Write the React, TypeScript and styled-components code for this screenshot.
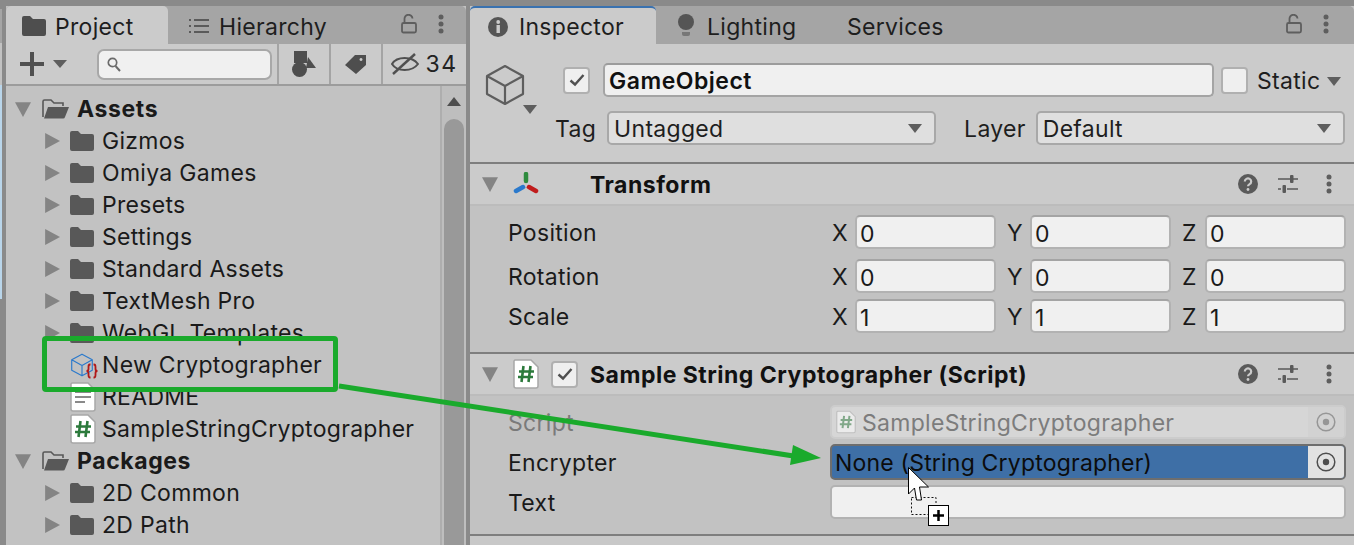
import { ReactNode } from 'react';
import styled, { createGlobalStyle } from 'styled-components';

const GlobalStyle = createGlobalStyle`
  html, body { margin: 0; padding: 0; background: #8a8a8a; }
  body { width: 1354px; height: 545px; overflow: hidden; font-family: Inter, "Liberation Sans", sans-serif; }
  * { box-sizing: border-box; }
`;

const Triangle = ({ dir, color = '#848484', size = 16 }: { dir: 'down' | 'right'; color?: string; size?: number }) => (
  <svg width={size} height={size} viewBox="0 0 14 14">
    <path d={dir === 'down' ? 'M0 1h14L7 14z' : 'M1 0l13 7-13 7z'} fill={color} />
  </svg>
);

const SmallArrow = () => (
  <svg width="14" height="9" viewBox="0 0 14 9"><path d="M0 0h14L7 9z" fill="#5e5e5e" /></svg>
);

const FolderIcon = ({ color = '#585858' }: { color?: string }) => (
  <svg width="24" height="20" viewBox="0 0 24 20">
    <path d="M0 2a2 2 0 0 1 2-2h6l3 3h11a2 2 0 0 1 2 2v13a2 2 0 0 1-2 2H2a2 2 0 0 1-2-2z" fill={color} />
  </svg>
);

const OpenFolderIcon = () => (
  <svg width="28" height="20" viewBox="0 0 28 20">
    <path d="M1 18V2.500A1.500 1.500 0 0 1 2.500 1H9l3 3h9v3" fill="none" stroke="#585858" strokeWidth="1.600" />
    <path d="M2 19.500 6 8h21l-4 10a2 2 0 0 1-2 1.500z" fill="#585858" />
  </svg>
);

const ScriptIcon = ({ faded = false, width = 26, height = 30 }: { faded?: boolean; width?: number; height?: number }) => (
  <svg width={width} height={height} viewBox="0 0 26 30" opacity={faded ? 0.5 : 1}>
    <path d="M2 1h16l7 7v19a2 2 0 0 1-2 2H3a2 2 0 0 1-2-2V2z" fill="#fff" stroke="#a8a8a8" strokeWidth="1.500" />
    <path d="M10.500 7 8.500 23M17.500 7l-2 16M6 12.500h15M5 18h15" stroke="#2c7a3c" strokeWidth="2.600" fill="none" />
  </svg>
);

const TextFileIcon = () => (
  <svg width="26" height="30" viewBox="0 0 26 30">
    <path d="M2 1h16l7 7v19a2 2 0 0 1-2 2H3a2 2 0 0 1-2-2V2z" fill="#fff" stroke="#a8a8a8" strokeWidth="1.500" />
    <path d="M5 10h16M5 15h16M5 20h10" stroke="#8a8a8a" strokeWidth="1.800" />
  </svg>
);

const CubeOutline = ({ color, size, width = 2 }: { color: string; size: number; width?: number }) => (
  <svg width={size} height={size} viewBox="0 0 40 42">
    <path d="M20 2 38 12v18L20 40 2 30V12zM2 12l18 10 18-10M20 22v18" fill="none" stroke={color} strokeWidth={width} strokeLinejoin="round" />
  </svg>
);

const LockIcon = () => (
  <svg width="16" height="20" viewBox="0 0 16 20">
    <path d="M3.500 8V5a4 4 0 0 1 8-.5" fill="none" stroke="#5e5e5e" strokeWidth="1.800" />
    <rect x="1" y="9" width="14" height="9.500" rx="1.500" fill="none" stroke="#5e5e5e" strokeWidth="1.800" />
  </svg>
);

const KebabIcon = ({ color = '#5e5e5e' }: { color?: string }) => (
  <svg width="6" height="20" viewBox="0 0 6 20">
    <circle cx="3" cy="3" r="2.500" fill={color} />
    <circle cx="3" cy="10" r="2.500" fill={color} />
    <circle cx="3" cy="17" r="2.500" fill={color} />
  </svg>
);

const HelpIcon = () => (
  <svg width="20" height="20" viewBox="0 0 20 20">
    <circle cx="10" cy="10" r="10" fill="#5a5a5a" />
    <path d="M6.800 7.500a3.200 3 0 1 1 4.800 2.600c-1 .6-1.600 1-1.600 2.200" fill="none" stroke="#cbcbcb" strokeWidth="2.200" />
    <circle cx="10" cy="15.500" r="1.400" fill="#cbcbcb" />
  </svg>
);

const PresetIcon = () => (
  <svg width="20" height="20" viewBox="0 0 20 20">
    <path d="M0 5h12M15 5h5M0 15h3M9 15h11" stroke="#5a5a5a" strokeWidth="1.600" />
    <rect x="12" y="1" width="3.500" height="8" rx="1" fill="#5a5a5a" />
    <rect x="4.500" y="11" width="3.500" height="8" rx="1" fill="#5a5a5a" />
  </svg>
);

const TargetIcon = ({ faded = false }: { faded?: boolean }) => (
  <svg width="20" height="20" viewBox="0 0 20 20" opacity={faded ? 0.45 : 1}>
    <circle cx="10" cy="10" r="8.800" fill="none" stroke="#4e4e4e" strokeWidth="1.500" />
    <circle cx="10" cy="10" r="3.200" fill="#4e4e4e" />
  </svg>
);

const CheckMark = () => (
  <svg width="16" height="14" viewBox="0 0 16 14">
    <path d="M1.500 7.500 6 11.500 14.500 2" fill="none" stroke="#505050" strokeWidth="2.400" />
  </svg>
);

const Page = styled.div`
  position: relative;
  width: 1354px;
  height: 545px;
  padding: 6px 0 0 6px;
  background: #8a8a8a;
  display: grid;
  grid-template-columns: 460px 884px;
  column-gap: 4px;
  overflow: hidden;

  &::before {
    content: '';
    position: absolute;
    left: 0;
    top: 9px;
    width: 2px;
    height: 290px;
    background: linear-gradient(#a5a5a5 0 34px, #c2c2c2 34px 76px, #b9d5ea 76px);
  }
`;

const Panel = styled.div`
  display: flex;
  flex-direction: column;
  height: 539px;
  background: #c2c2c2;
  min-width: 0;
`;

const TabStrip = styled.div`
  height: 38px;
  flex: none;
  background: #a5a5a5;
  border-radius: 5px 5px 0 0;
  display: flex;
  align-items: flex-start;
`;

const Tab = styled.div<{ $active?: boolean; $width: number; $accent?: boolean; $pad: number; $gap: number }>`
  width: ${(p) => p.$width}px;
  height: 38px;
  display: flex;
  align-items: center;
  gap: ${(p) => p.$gap}px;
  padding: ${(p) => (p.$accent ? 2 : 4)}px 0 0 ${(p) => p.$pad}px;
  font-size: 23px;
  letter-spacing: 0.3px;
  color: #1e1e1e;
  border-radius: 5px 5px 0 0;
  background: ${(p) => (p.$active ? '#cbcbcb' : 'transparent')};
  border-top: ${(p) => (p.$accent ? '2px solid #3a72b0' : 'none')};
`;

const TabGlyph = styled.span`
  display: flex;
  margin-top: -2px;
`;

const TabActions = styled.div<{ $right: number }>`
  margin-left: auto;
  display: flex;
  align-items: center;
  gap: 21px;
  height: 36px;
  padding-right: ${(p) => p.$right}px;
`;

const Toolbar = styled.div`
  height: 42px;
  flex: none;
  background: #cbcbcb;
  border-bottom: 2px solid #9c9c9c;
  display: flex;
  align-items: center;
`;

const CreateButton = styled.div`
  width: 78px;
  padding-left: 14px;
  display: flex;
  align-items: center;
  gap: 9px;
`;

const SearchBox = styled.div`
  width: 175px;
  height: 31px;
  margin-left: 13px;
  margin-right: 5px;
  background: #f0f0f0;
  border: 2px solid #a8a8a8;
  border-radius: 7px;
  display: flex;
  align-items: center;
  padding-left: 8px;
`;

const ToolCell = styled.div<{ $width: number }>`
  width: ${(p) => p.$width}px;
  height: 40px;
  border-left: 2px solid #a4a4a4;
  display: flex;
  align-items: center;
  justify-content: center;
  gap: 6px;
  font-size: 23px;
  letter-spacing: 1.5px;
  color: #222;
`;

const TreeArea = styled.div`
  flex: 1;
  display: flex;
  min-height: 0;
`;

const Tree = styled.div`
  flex: 1;
  padding-top: 7px;
`;

const TreeRow = styled.div<{ $depth: number; $bold?: boolean }>`
  height: 32px;
  display: flex;
  align-items: center;
  padding-left: ${(p) => (p.$depth === 0 ? 9 : p.$depth === 1 ? 38 : 64)}px;
  font-size: 23px;
  font-weight: ${(p) => (p.$bold ? 700 : 400)};
  letter-spacing: ${(p) => (p.$bold ? 0.6 : 0.3)}px;
  color: #1a1a1a;
  white-space: nowrap;
`;

const Caret = styled.span<{ $width: number }>`
  width: ${(p) => p.$width}px;
  display: flex;
  flex: none;
`;

const RowIcon = styled.span<{ $width: number }>`
  width: ${(p) => p.$width}px;
  flex: none;
  display: flex;
  align-items: center;
`;

const Braces = styled.svg`
  margin: 11px 0 0 -9px;
  flex: none;
`;

const Scrollbar = styled.div`
  width: 26px;
  flex: none;
  background: #bebebe;
  border-left: 2px solid #aeaeae;
  display: flex;
  flex-direction: column;
  align-items: center;
  padding-top: 11px;
`;

const ScrollThumb = styled.div`
  width: 20px;
  flex: 1;
  margin-top: 13px;
  background: #999999;
  border-radius: 10px 10px 0 0;
`;

const ObjectHeader = styled.div`
  height: 120px;
  flex: none;
  background: #cbcbcb;
  border-bottom: 2px solid #7e7e7e;
  display: grid;
  grid-template-columns: 85px 1fr;
  padding-top: 19px;
`;

const BigIcon = styled.div`
  position: relative;
  display: flex;
  align-items: flex-start;
  padding: 1px 0 0 14px;
`;

const BigIconArrow = styled.span`
  position: absolute;
  left: 53px;
  top: 42px;
  display: flex;
`;

const HeaderRows = styled.div`
  display: flex;
  flex-direction: column;
  gap: 14px;
`;

const HeaderRow = styled.div<{ $indent?: number }>`
  display: flex;
  align-items: center;
  height: 34px;
  padding-left: ${(p) => p.$indent ?? 0}px;
  font-size: 23px;
  letter-spacing: 0.3px;
  color: #1e1e1e;
`;

const HeaderLabel = styled.span<{ $left?: number; $right?: number }>`
  padding-top: 2px;
  margin-left: ${(p) => p.$left ?? 0}px;
  margin-right: ${(p) => p.$right ?? 0}px;
`;

const CheckBox = styled.div`
  width: 27px;
  height: 27px;
  flex: none;
  background: #efefef;
  border: 2px solid #b0b0b0;
  border-radius: 4px;
  display: flex;
  align-items: center;
  justify-content: center;
`;

const NameField = styled.div`
  width: 611px;
  height: 34px;
  margin-left: 13px;
  margin-right: 7px;
  padding: 2px 0 0 4px;
  background: #f0f0f0;
  border: 2px solid #a4a4a4;
  border-top-color: #9c9c9c;
  border-radius: 5px;
  display: flex;
  align-items: center;
  font-weight: 600;
  letter-spacing: 0.5px;
  color: #111;
`;

const StaticLabel = styled.div`
  margin-left: 9px;
  padding-top: 2px;
  display: flex;
  align-items: center;
  gap: 7px;
`;

const Select = styled.div<{ $width: number }>`
  width: ${(p) => p.$width}px;
  height: 34px;
  background: #dfdfdf;
  border: 2px solid #a8a8a8;
  border-radius: 5px;
  display: flex;
  align-items: center;
  justify-content: space-between;
  padding: 1px 12px 0 5px;
`;

const SectionHeader = styled.div`
  height: 40px;
  flex: none;
  background: #cbcbcb;
  display: flex;
  align-items: center;
  padding-left: 12px;
  font-size: 23px;
  font-weight: 700;
  letter-spacing: 0.5px;
  color: #111;
`;

const SectionTitle = styled.span<{ $left: number }>`
  margin-left: ${(p) => p.$left}px;
  padding-top: 2px;
`;

const TransformMark = styled.svg`
  margin-left: 15px;
  flex: none;
`;

const ScriptMark = styled.span`
  margin-left: 15px;
  margin-right: 12px;
  display: flex;
`;

const SectionActions = styled.div`
  margin-left: auto;
  display: flex;
  align-items: center;
  gap: 20px;
  padding-right: 22px;
`;

const KebabSlot = styled.span`
  display: flex;
  margin-left: 8px;
`;

const SectionBody = styled.div<{ $height: number; $top: number }>`
  height: ${(p) => p.$height}px;
  flex: none;
  padding-top: ${(p) => p.$top}px;
  background: #c2c2c2;
  border-top: 2px solid #bcbcbc;
  border-bottom: 2px solid #7e7e7e;
`;

const TransformRow = styled.div<{ $height: number }>`
  height: ${(p) => p.$height}px;
  display: flex;
  align-items: flex-start;
  padding-left: 38px;
  font-size: 23px;
  letter-spacing: 0.3px;
  color: #1a1a1a;
`;

const ScriptRow = styled.div<{ $muted?: boolean }>`
  height: 40px;
  display: flex;
  align-items: center;
  padding-left: 38px;
  font-size: 23px;
  letter-spacing: 0.3px;
  color: ${(p) => (p.$muted ? '#7a7a7a' : '#1a1a1a')};
`;

const PropertyLabel = styled.span`
  width: 324px;
  flex: none;
  line-height: 32px;
  padding-top: 2px;
`;

const AxisGroup = styled.div`
  display: grid;
  grid-template-columns: repeat(3, 164px);
  column-gap: 11px;
`;

const Axis = styled.div`
  display: flex;
  align-items: center;
`;

const AxisLabel = styled.span`
  width: 23px;
  flex: none;
  padding-top: 2px;
`;

const NumberField = styled.div`
  width: 141px;
  height: 34px;
  padding: 4px 0 0 3px;
  background: #f0f0f0;
  border: 2px solid #b2b2b2;
  border-top-color: #a4a4a4;
  border-radius: 5px;
  display: flex;
  align-items: center;
`;

const ObjectField = styled.div<{ $variant: 'readonly' | 'drop' | 'text' }>`
  width: 516px;
  height: ${(p) => (p.$variant === 'drop' ? 36 : 34)}px;
  margin-left: -2px;
  display: flex;
  align-items: center;
  gap: 6px;
  padding-left: ${(p) => (p.$variant === 'drop' ? 3 : 4)}px;
  overflow: hidden;
  border-radius: 5px;
  border: 2px solid ${(p) => (p.$variant === 'drop' ? '#6e6e6e' : p.$variant === 'text' ? '#b2b2b2' : '#cccccc')};
  background: ${(p) => (p.$variant === 'drop' ? '#3e6fa6' : p.$variant === 'text' ? '#f0f0f0' : '#d6d6d6')};
  color: ${(p) => (p.$variant === 'readonly' ? '#7c7c7c' : '#0c0c0c')};
  letter-spacing: ${(p) => (p.$variant === 'drop' ? 0.2 : 0.3)}px;
`;

const FieldText = styled.span`
  padding-top: 2px;
`;

const PickerButton = styled.div<{ $faded?: boolean }>`
  margin-left: auto;
  width: 36px;
  height: 100%;
  flex: none;
  display: flex;
  align-items: center;
  justify-content: center;
  background: ${(p) => (p.$faded ? '#d2d2d2' : '#e2e2e2')};
`;

const InspectorRest = styled.div`
  flex: 1;
  background: #c8c8c8;
`;

const Highlight = styled.div`
  position: absolute;
  left: 42px;
  top: 336px;
  width: 296px;
  height: 56px;
  border: 5px solid #1aaa2c;
  border-radius: 4px;
`;

const Overlay = styled.svg`
  position: absolute;
  left: 0;
  top: 0;
  pointer-events: none;
`;

const tree: { label: string; depth: number; kind: 'root' | 'folder' | 'asset' | 'text' | 'script' }[] = [
  { label: 'Assets', depth: 0, kind: 'root' },
  { label: 'Gizmos', depth: 1, kind: 'folder' },
  { label: 'Omiya Games', depth: 1, kind: 'folder' },
  { label: 'Presets', depth: 1, kind: 'folder' },
  { label: 'Settings', depth: 1, kind: 'folder' },
  { label: 'Standard Assets', depth: 1, kind: 'folder' },
  { label: 'TextMesh Pro', depth: 1, kind: 'folder' },
  { label: 'WebGL Templates', depth: 1, kind: 'folder' },
  { label: 'New Cryptographer', depth: 2, kind: 'asset' },
  { label: 'README', depth: 2, kind: 'text' },
  { label: 'SampleStringCryptographer', depth: 2, kind: 'script' },
  { label: 'Packages', depth: 0, kind: 'root' },
  { label: '2D Common', depth: 1, kind: 'folder' },
  { label: '2D Path', depth: 1, kind: 'folder' },
];

const transformRows = [
  { label: 'Position', values: ['0', '0', '0'], height: 44 },
  { label: 'Rotation', values: ['0', '0', '0'], height: 40 },
  { label: 'Scale', values: ['1', '1', '1'], height: 40 },
];

function TreeEntry({ label, depth, kind }: (typeof tree)[number]) {
  let icon: ReactNode = null;
  if (kind === 'root') {
    return (
      <TreeRow $depth={depth} $bold>
        <Caret $width={27}><Triangle dir="down" /></Caret>
        <RowIcon $width={35}><OpenFolderIcon /></RowIcon>
        {label}
      </TreeRow>
    );
  }
  if (kind === 'folder') {
    return (
      <TreeRow $depth={depth}>
        <Caret $width={26}><Triangle dir="right" /></Caret>
        <RowIcon $width={32}><FolderIcon /></RowIcon>
        {label}
      </TreeRow>
    );
  }
  if (kind === 'asset') {
    icon = (
      <>
        <CubeOutline color="#2a79cc" size={24} />
        <Braces width="14" height="16" viewBox="0 0 14 16">
          <path d="M5.500 1.500H5C3.500 1.500 3.500 2.500 3.500 4v2C3.500 7 2.500 8 1.500 8c1 0 2 1 2 2v2c0 1.500 0 2.500 1.500 2.500h.5M8.500 1.500H9c1.500 0 1.500 1 1.500 2.500v2c0 1 1 2 2 2-1 0-2 1-2 2v2c0 1.500 0 2.500-1.500 2.500h-.5" fill="none" stroke="#b01818" strokeWidth="1.800" />
        </Braces>
      </>
    );
  } else if (kind === 'text') {
    icon = <TextFileIcon />;
  } else {
    icon = <ScriptIcon />;
  }
  return (
    <TreeRow $depth={depth}>
      <RowIcon $width={32}>{icon}</RowIcon>
      {label}
    </TreeRow>
  );
}

function ComponentActions() {
  return (
    <SectionActions>
      <HelpIcon />
      <PresetIcon />
      <KebabSlot><KebabIcon /></KebabSlot>
    </SectionActions>
  );
}

export default function App() {
  return (
    <>
      <GlobalStyle />
      <Page>
        <Panel>
          <TabStrip>
            <Tab $active $width={162} $pad={16} $gap={9}>
              <TabGlyph><FolderIcon color="#4e4e4e" /></TabGlyph>
              Project
            </Tab>
            <Tab $width={160} $pad={20} $gap={9}>
              <TabGlyph>
                <svg width="22" height="16" viewBox="0 0 22 16">
                  <path d="M6 2h15M6 8h15M6 14h15M1 2h2M1 8h2M1 14h2" stroke="#5a5a5a" strokeWidth="1.800" />
                </svg>
              </TabGlyph>
              Hierarchy
            </Tab>
            <TabActions $right={22}>
              <LockIcon />
              <KebabIcon />
            </TabActions>
          </TabStrip>
          <Toolbar>
            <CreateButton>
              <svg width="24" height="24" viewBox="0 0 24 24">
                <path d="M12 0v24M0 12h24" stroke="#505050" strokeWidth="4" />
              </svg>
              <svg width="14" height="8" viewBox="0 0 14 8"><path d="M0 0h14L7 8z" fill="#5e5e5e" /></svg>
            </CreateButton>
            <SearchBox>
              <svg width="14" height="15" viewBox="0 0 14 15">
                <circle cx="5.500" cy="5.500" r="4.200" fill="none" stroke="#6a6a6a" strokeWidth="1.700" />
                <path d="m8.500 9 4.500 5" stroke="#6a6a6a" strokeWidth="2" />
              </svg>
            </SearchBox>
            <ToolCell $width={52}>
              <svg width="24" height="26" viewBox="0 0 24 26">
                <rect x="2" y="0" width="13" height="12" fill="#4e4e4e" />
                <path d="M16 6l8 11h-10z" fill="#4e4e4e" />
                <circle cx="7.500" cy="18.500" r="7.500" fill="#4e4e4e" />
              </svg>
            </ToolCell>
            <ToolCell $width={52}>
              <svg width="22" height="20" viewBox="0 0 22 20">
                <path d="M0 11 10 1h11v10L11 20zM16 4a1.500 1.500 0 1 0 .01 0z" fill="#4e4e4e" fillRule="evenodd" />
              </svg>
            </ToolCell>
            <ToolCell $width={85}>
              <svg width="28" height="22" viewBox="0 0 28 22">
                <path d="M1 11c5-8 20-8 26 0-6 8-21 8-26 0z" fill="none" stroke="#505050" strokeWidth="2" />
                <path d="M2 21 24 1" stroke="#505050" strokeWidth="2.400" />
              </svg>
              34
            </ToolCell>
          </Toolbar>
          <TreeArea>
            <Tree>
              {tree.map((entry) => (
                <TreeEntry key={entry.label} {...entry} />
              ))}
            </Tree>
            <Scrollbar>
              <svg width="14" height="9" viewBox="0 0 14 9"><path d="M7 0l7 9H0z" fill="#4e4e4e" /></svg>
              <ScrollThumb />
            </Scrollbar>
          </TreeArea>
        </Panel>

        <Panel>
          <TabStrip>
            <Tab $active $accent $width={186} $pad={18} $gap={11}>
              <svg width="20" height="20" viewBox="0 0 20 20">
                <circle cx="10" cy="10" r="10" fill="#555" />
                <rect x="8.500" y="8" width="3.400" height="8" fill="#cbcbcb" />
                <circle cx="10.200" cy="5" r="1.900" fill="#cbcbcb" />
              </svg>
              Inspector
            </Tab>
            <Tab $width={170} $pad={21} $gap={12}>
              <TabGlyph>
                <svg width="18" height="24" viewBox="0 0 18 24">
                  <circle cx="9" cy="8" r="8" fill="#555" />
                  <path d="M5 18h8v2a2 2 0 0 1-2 2H7a2 2 0 0 1-2-2z" fill="#777" />
                </svg>
              </TabGlyph>
              Lighting
            </Tab>
            <Tab $width={140} $pad={21} $gap={0}>Services</Tab>
            <TabActions $right={25}>
              <LockIcon />
              <KebabIcon />
            </TabActions>
          </TabStrip>
          <ObjectHeader>
            <BigIcon>
              <CubeOutline color="#5e5e5e" size={42} width={2.200} />
              <BigIconArrow><SmallArrow /></BigIconArrow>
            </BigIcon>
            <HeaderRows>
              <HeaderRow $indent={8}>
                <CheckBox><CheckMark /></CheckBox>
                <NameField>GameObject</NameField>
                <CheckBox />
                <StaticLabel>
                  Static
                  <SmallArrow />
                </StaticLabel>
              </HeaderRow>
              <HeaderRow>
                <HeaderLabel $right={11}>Tag</HeaderLabel>
                <Select $width={329}>
                  Untagged
                  <SmallArrow />
                </Select>
                <HeaderLabel $left={28} $right={10}>Layer</HeaderLabel>
                <Select $width={309}>
                  Default
                  <SmallArrow />
                </Select>
              </HeaderRow>
            </HeaderRows>
          </ObjectHeader>

          <SectionHeader>
            <Triangle dir="down" />
            <TransformMark width="26" height="24" viewBox="0 0 26 24">
              <path d="M13 2v7" stroke="#2e8b3e" strokeWidth="4.500" strokeLinecap="round" />
              <path d="M10 15l-7 4" stroke="#2a79cc" strokeWidth="4.500" strokeLinecap="round" />
              <path d="M16 15l7 4" stroke="#c01c1c" strokeWidth="4.500" strokeLinecap="round" />
            </TransformMark>
            <SectionTitle $left={51}>Transform</SectionTitle>
            <ComponentActions />
          </SectionHeader>
          <SectionBody $height={150} $top={9}>
            {transformRows.map((row) => (
              <TransformRow key={row.label} $height={row.height}>
                <PropertyLabel>{row.label}</PropertyLabel>
                <AxisGroup>
                  {['X', 'Y', 'Z'].map((axis, i) => (
                    <Axis key={axis}>
                      <AxisLabel>{axis}</AxisLabel>
                      <NumberField>{row.values[i]}</NumberField>
                    </Axis>
                  ))}
                </AxisGroup>
              </TransformRow>
            ))}
          </SectionBody>

          <SectionHeader>
            <Triangle dir="down" />
            <ScriptMark><ScriptIcon /></ScriptMark>
            <CheckBox><CheckMark /></CheckBox>
            <SectionTitle $left={12}>Sample String Cryptographer (Script)</SectionTitle>
            <ComponentActions />
          </SectionHeader>
          <SectionBody $height={142} $top={6}>
            <ScriptRow $muted>
              <PropertyLabel>Script</PropertyLabel>
              <ObjectField $variant="readonly">
                <ScriptIcon faded width={20} height={24} />
                <FieldText>SampleStringCryptographer</FieldText>
                <PickerButton $faded><TargetIcon faded /></PickerButton>
              </ObjectField>
            </ScriptRow>
            <ScriptRow>
              <PropertyLabel>Encrypter</PropertyLabel>
              <ObjectField $variant="drop">
                <FieldText>None (String Cryptographer)</FieldText>
                <PickerButton><TargetIcon /></PickerButton>
              </ObjectField>
            </ScriptRow>
            <ScriptRow>
              <PropertyLabel>Text</PropertyLabel>
              <ObjectField $variant="text" />
            </ScriptRow>
          </SectionBody>
          <InspectorRest />
        </Panel>

        <Highlight />
        <Overlay width="1354" height="545" viewBox="0 0 1354 545">
          <path d="M339 386 800 457" stroke="#1aaa2c" strokeWidth="5" fill="none" />
          <path d="M821 458 793 445 790 465z" fill="#1aaa2c" />
          <path d="M911.500 497.500h24.500v17h-24.500z" fill="none" stroke="#111" strokeWidth="1" strokeDasharray="2 2" />
          <rect x="928.500" y="505.500" width="20" height="20" fill="#fff" stroke="#000" />
          <path d="M938.500 510v11M933 515.500h11" stroke="#000" strokeWidth="2.500" />
          <path d="M908.500 467.500V494l6-6 2 12h5l-2-13h9z" fill="#fff" stroke="#000" strokeWidth="1" />
        </Overlay>
      </Page>
    </>
  );
}
